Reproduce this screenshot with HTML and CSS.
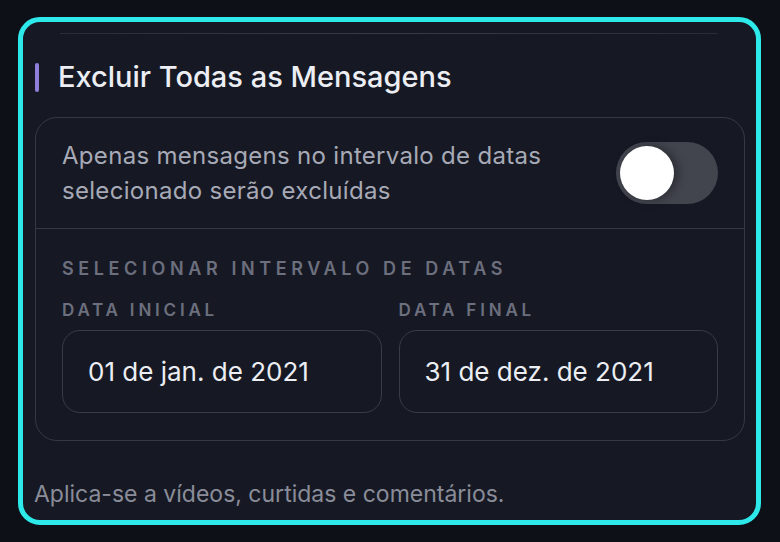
FILE: index.html
```html
<!DOCTYPE html>
<html lang="pt-BR">
<head>
<meta charset="utf-8">
<link rel="stylesheet" href="styles.css">
</head>
<body>
<div class="panel">
  <div class="top-rule"></div>
  <div class="title-row">
    <span class="accent"></span>
    <h2 class="title">Excluir Todas as Mensagens</h2>
  </div>
  <div class="card">
    <div class="toggle-row">
      <p class="toggle-text">Apenas mensagens no intervalo de datas<br>selecionado serão excluídas</p>
      <div class="switch"><span class="knob"></span></div>
    </div>
    <div class="range">
      <div class="section-label">SELECIONAR INTERVALO DE DATAS</div>
      <div class="dates">
        <div class="field">
          <div class="field-label">DATA INICIAL</div>
          <div class="date-box">01 de jan. de 2021</div>
        </div>
        <div class="field">
          <div class="field-label">DATA FINAL</div>
          <div class="date-box">31 de dez. de 2021</div>
        </div>
      </div>
    </div>
  </div>
  <p class="footnote">Aplica-se a vídeos, curtidas e comentários.</p>
</div>
</body>
</html>
```

FILE: styles.css
```css
* { box-sizing: border-box; }
html, body {
  margin: 0;
  padding: 0;
  background: #0e1018;
  font-family: Inter, "Noto Sans", sans-serif;
}
body {
  padding: 17px 0 0 18px;
  height: 542px;
  overflow: hidden;
}
.panel {
  width: 743px;
  height: 508px;
  border: 5px solid #2ee9ea;
  border-radius: 22px;
  background: #161924;
  display: flex;
  flex-direction: column;
  padding: 0 11px 0 12px;
}
.top-rule {
  height: 1px;
  margin: 11px 27px 0 25px;
  background: linear-gradient(90deg, #2a2d37 0%, #383b46 50%, #2a2d37 100%);
}
.title-row {
  display: flex;
  align-items: center;
  margin-top: 28px;
  height: 30px;
}
.accent {
  width: 4px;
  height: 29px;
  border-radius: 2px;
  background: #8f7fdc;
  margin-right: 19px;
}
.title {
  margin: 0;
  font-size: 29px;
  line-height: 30px;
  font-weight: 500;
  color: #eceef3;
}
.card {
  margin-top: 25px;
  border: 1px solid #363945;
  border-radius: 22px;
}
.toggle-row {
  display: flex;
  align-items: center;
  justify-content: space-between;
  height: 111px;
  padding: 0 26px;
  border-bottom: 1px solid #363945;
}
.toggle-text {
  margin: 0;
  font-size: 24px;
  line-height: 35px;
  letter-spacing: 0.3px;
  color: #a7aab6;
}
.switch {
  width: 102px;
  height: 62px;
  border-radius: 31px;
  background: #42444e;
  padding: 4px;
  display: flex;
  align-items: center;
}
.knob {
  width: 54px;
  height: 54px;
  border-radius: 50%;
  background: #ffffff;
  box-shadow: 4px 0 10px rgba(0, 0, 0, 0.35);
}
.range {
  padding: 29px 26px 27px;
}
.section-label,
.field-label {
  line-height: 22px;
  font-weight: 600;
  color: #6c6f7d;
}
.section-label {
  font-size: 18px;
  letter-spacing: 4.6px;
}
.field-label {
  font-size: 17px;
  letter-spacing: 3.8px;
}
.dates {
  display: flex;
  gap: 17px;
  margin-top: 19px;
}
.field { flex: 1; }
.date-box {
  margin-top: 9px;
  height: 83px;
  border: 1px solid #393c48;
  border-radius: 18px;
  display: flex;
  align-items: center;
  padding-left: 25px;
  font-size: 26px;
  color: #eceef3;
}
.footnote {
  margin: auto 0 12px -1px;
  font-size: 23px;
  line-height: 28px;
  color: #8a8d99;
}
```
